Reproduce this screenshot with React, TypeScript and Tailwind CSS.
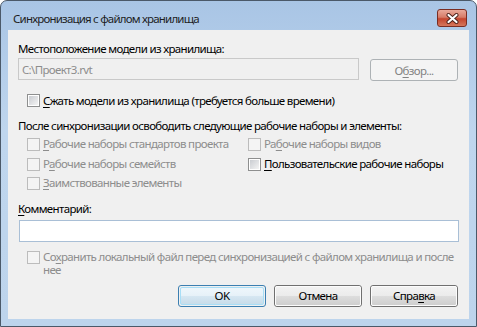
import React from "react"

function U({ children }: { children: React.ReactNode }) {
  return <span className="underline underline-offset-[2px] decoration-1">{children}</span>
}

function Check({ children, disabled }: { children: React.ReactNode; disabled?: boolean }) {
  return (
    <div className="flex items-start gap-[3px] whitespace-nowrap">
      {disabled ? (
        <span className="mt-px w-[13px] h-[13px] shrink-0 border border-[#bcbcbc] bg-[#f4f4f4]" />
      ) : (
        <span className="mt-px w-[13px] h-[13px] shrink-0 border border-[#8e8f8f] p-px bg-white">
          <span className="block w-full h-full bg-[linear-gradient(135deg,#c9ccd1,#f4f4f4)]" />
        </span>
      )}
      <span className={disabled ? "text-[#8d8d8d]" : "text-black"}>{children}</span>
    </div>
  )
}

function Button({ children, primary, disabled }: { children: React.ReactNode; primary?: boolean; disabled?: boolean }) {
  if (disabled) {
    return (
      <div className="w-[88px] h-[22px] rounded-[3px] border border-[#adb2b5] bg-[#f4f4f4] text-[#838383] flex items-center justify-center">
        {children}
      </div>
    )
  }
  if (primary) {
    return (
      <div className="w-[88px] h-[22px] rounded-[3px] border border-[#3c7fb1] p-px">
        <div className="w-full h-full rounded-[2px] border border-[#a8def6] bg-[linear-gradient(#eef6fb_0%,#e6f1f8_50%,#d6e7f2_50%,#c8dce9_100%)] flex items-center justify-center">
          {children}
        </div>
      </div>
    )
  }
  return (
    <div className="w-[88px] h-[22px] rounded-[3px] border border-[#707070]">
      <div className="w-full h-full rounded-[2px] border border-[#fcfcfc] bg-[linear-gradient(#f2f2f2_0%,#ebebeb_50%,#dddddd_50%,#cfcfcf_100%)] flex items-center justify-center">
        {children}
      </div>
    </div>
  )
}

export default function App() {
  return (
    <div className="w-[477px] h-[327px] bg-white font-['Noto_Sans',sans-serif] text-[11.5px] leading-[15px] tracking-[-0.65px] text-black">
      {/* Window frame */}
      <div className="w-full h-full rounded-t-[7px] border border-[#4b5969] bg-[linear-gradient(#a9c5e5,#bfd6ee_40%,#bdd4ec)] flex flex-col">
        {/* Title bar */}
        <div className="h-[29px] pt-[5px] pl-[12px] pr-[9px] flex items-center justify-between shrink-0">
          <span className="text-[11.5px] tracking-[-0.8px] text-[#1e1e1e]">Синхронизация с файлом хранилища</span>
          <div className="w-[30px] h-[18px] rounded-[3px] border border-[#7a2d22] bg-[linear-gradient(#e9a99a_0%,#d77c68_45%,#c4452e_55%,#d5775c_100%)] flex items-center justify-center">
            <svg width="13" height="11" viewBox="0 0 13 11">
              <path d="M2.5 2 L10.5 9 M10.5 2 L2.5 9" stroke="#4a2019" strokeWidth="4" strokeLinecap="round" />
              <path d="M2.5 2 L10.5 9 M10.5 2 L2.5 9" stroke="#ffffff" strokeWidth="2.2" strokeLinecap="round" />
            </svg>
          </div>
        </div>

        {/* Client area */}
        <div className="mx-[7px] h-[289px] bg-[#f0f0f0] px-[10px] pt-[11px] flex flex-col">
          <div>Местоположение модели из хранилища:</div>

          <div className="mt-[2px] flex items-start pr-[1px]">
            <div className="flex-1 h-[22px] border border-[#c9c9c9] bg-[#f0f0f0] px-[3px] flex items-center text-[#8d8d8d]">
              C:\Проект3.rvt
            </div>
            <div className="ml-[11px] mt-px">
              <Button disabled>
                О<U>б</U>зор...
              </Button>
            </div>
          </div>

          <div className="mt-[12px] pl-[9px]">
            <Check>
              <U>С</U>жать модели из хранилища (требуется больше времени)
            </Check>
          </div>

          <div className="mt-[10px] whitespace-nowrap">После синхронизации освободить следующие рабочие наборы и элементы:</div>

          <div className="mt-[4px] pl-[9px] grid grid-cols-[221px_1fr] gap-y-[5px] leading-[14.5px]">
            <Check disabled>
              <U>Р</U>абочие наборы стандартов проекта
            </Check>
            <Check disabled>
              Ра<U>б</U>очие наборы видов
            </Check>
            <Check disabled>
              Р<U>а</U>бочие наборы семейств
            </Check>
            <Check>
              <U>П</U>ользовательские рабочие наборы
            </Check>
            <Check disabled>
              <U>З</U>аимствованные элементы
            </Check>
          </div>

          <div className="mt-[10px]">
            <U>К</U>омментарий:
          </div>

          <div className="mt-[4px] ml-px h-[22px] border border-[#a9bfd6] bg-white" />

          <div className="mt-[8px] pl-[9px] leading-[13px]">
            <Check disabled>
              Со<U>х</U>ранить локальный файл перед синхронизацией с файлом хранилища и после
              <br />
              нее
            </Check>
          </div>

          <div className="mt-[9px] flex justify-end gap-[8px] pr-[1px]">
            <Button primary>OK</Button>
            <Button>Отмена</Button>
            <Button>
              Спра<U>в</U>ка
            </Button>
          </div>
        </div>
      </div>
    </div>
  )
}
